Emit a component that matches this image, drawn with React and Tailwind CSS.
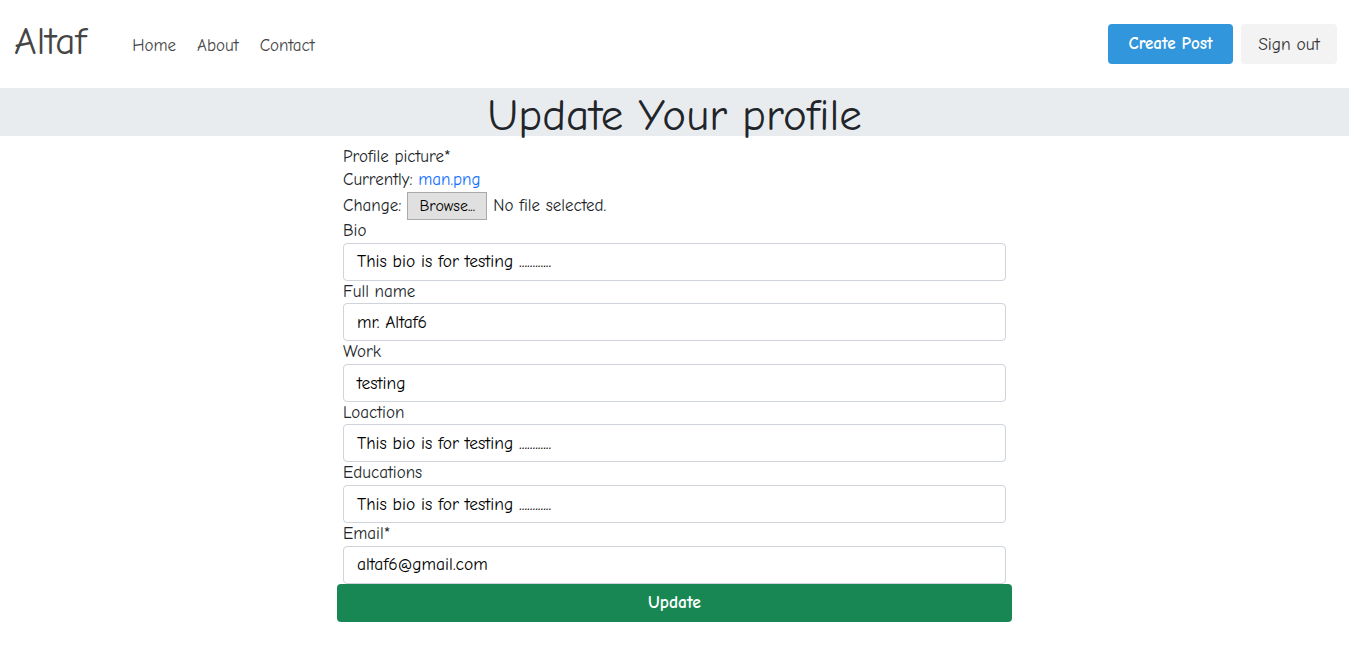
const FIELDS = [
  { label: 'Bio', value: 'This bio is for testing ............' },
  { label: 'Full name', value: 'mr. Altaf6' },
  { label: 'Work', value: 'testing' },
  { label: 'Loaction', value: 'This bio is for testing ............' },
  { label: 'Educations', value: 'This bio is for testing ............' },
  { label: 'Email*', value: 'altaf6@gmail.com' },
];

export default function App() {
  return (
    <div className="min-h-screen bg-white text-[#212529] font-['Comic_Sans_MS','Comic_Neue','Open_Sans',sans-serif]">
      {/* Navbar */}
      <header className="h-[88px] flex items-center justify-between pl-[14px] pr-3">
        <div className="flex items-center mt-[3px]">
          <span className="text-[39px] text-[#454545] leading-none -mt-2">Altaf</span>
          <nav className="flex items-center gap-[21px] ml-[46px] text-[17px] text-[#454545]">
            <a>Home</a>
            <a>About</a>
            <a>Contact</a>
          </nav>
        </div>
        <div className="flex items-center gap-2">
          <button className="h-10 w-[125px] rounded bg-[#3196db] text-white font-bold text-[17px]">Create Post</button>
          <button className="h-10 w-[96px] rounded bg-[#f3f3f3] text-[#333] text-[17.5px]">Sign out</button>
        </div>
      </header>

      {/* Title band */}
      <div className="h-12 bg-[#e9ecef] flex items-center justify-center">
        <h1 className="text-[45px] leading-none text-[#212529] mt-[6px]">Update Your profile</h1>
      </div>

      {/* Form */}
      <form className="w-[675px] mx-auto pt-[9px] text-[17px] text-[#212529]">
        <div className="px-[6px]">
          <div className="leading-[23px]">Profile picture*</div>
          <div className="leading-[23px]">
            Currently: <a className="text-[#0d6efd]">man.png</a>
          </div>
          <div className="flex items-center h-[28px] mt-[1px]">
            <span>Change:</span>
            <span className="ml-[6px] h-[28px] w-[80px] justify-center flex items-center bg-[#e0e0e0] border border-[#a9a9a9] text-[16px] text-black">Browse...</span>
            <span className="ml-[6px]">No file selected.</span>
          </div>
          {FIELDS.map((f) => (
            <div key={f.label}>
              <div className="leading-[22.6px]">{f.label}</div>
              <div className="h-[38px] border border-[#ced4da] rounded-[4px] flex items-center px-[13px] text-black text-[17.5px]">
                {f.value}
              </div>
            </div>
          ))}
        </div>
        <button className="w-full h-[38px] rounded-[4px] bg-[#198754] text-white text-[17.5px] font-bold">Update</button>
      </form>
    </div>
  );
}
